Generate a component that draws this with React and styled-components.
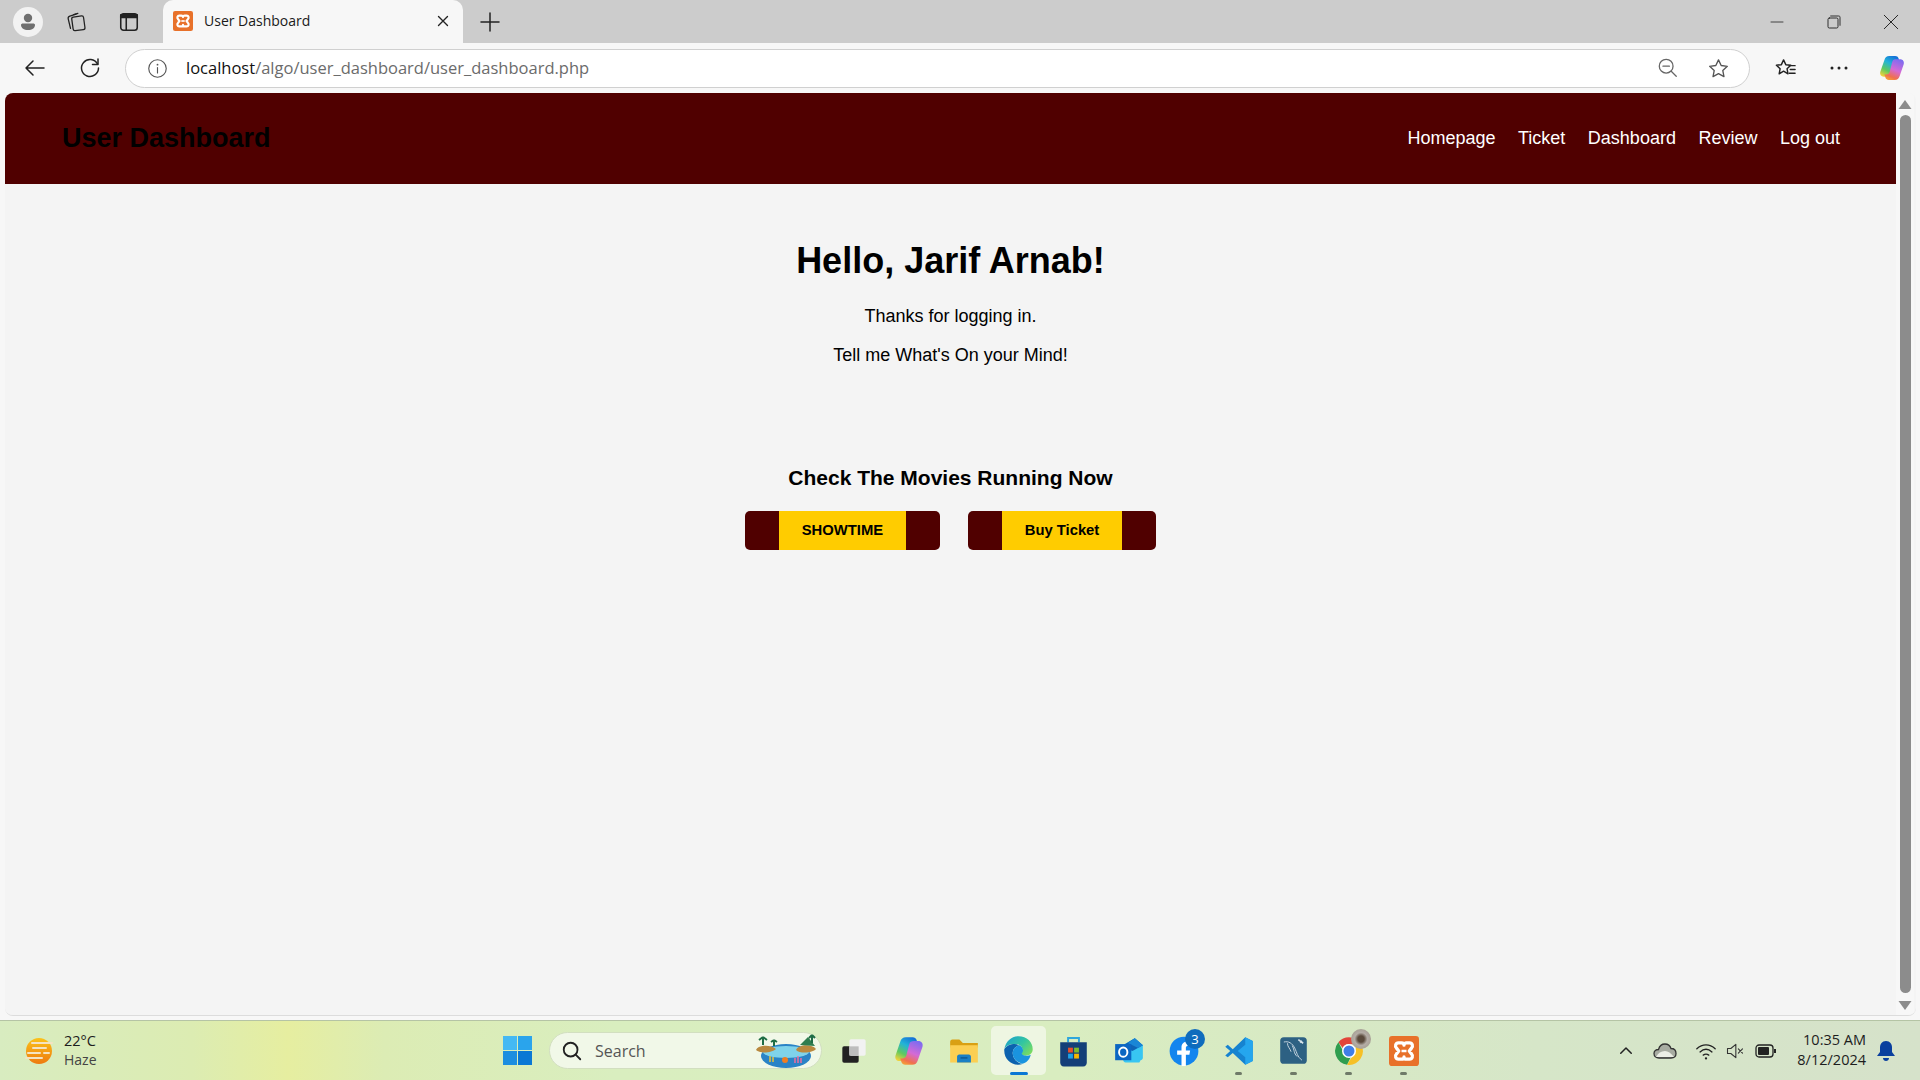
import React from "react";
import styled, { createGlobalStyle } from "styled-components";

const GlobalStyle = createGlobalStyle`
  html, body {
    margin: 0;
    padding: 0;
    height: 100%;
    overflow: hidden;
    font-family: "Liberation Sans", Arial, sans-serif;
  }
  * { box-sizing: border-box; }
`;

const uiFont = `"Open Sans", "Noto Sans", sans-serif`;
const maroon = "#500000";

const Screen = styled.div`
  width: 1920px;
  height: 1080px;
  display: flex;
  flex-direction: column;
  background: #f7f7f7;
`;

/* browser chrome */
const TabStrip = styled.div`
  height: 43px;
  flex: none;
  display: flex;
  align-items: center;
  background: #cccccc;
`;
const StripButton = styled.div`
  width: ${(p) => p.$w || 53}px;
  height: 43px;
  flex: none;
  display: flex;
  align-items: center;
  justify-content: center;
`;
const Avatar = styled.div`
  width: 30px;
  height: 30px;
  margin-left: 13px;
  margin-right: 6px;
  flex: none;
  border-radius: 50%;
  background: #f2f2f2;
  display: flex;
  align-items: center;
  justify-content: center;
`;
const Tab = styled.div`
  width: 300px;
  height: 43px;
  margin-left: 8px;
  flex: none;
  display: flex;
  align-items: center;
  padding: 0 11px 2px 10px;
  background: #f7f7f7;
  border-radius: 10px 10px 0 0;
`;
const TabTitle = styled.span`
  flex: 1;
  margin-left: 11px;
  font: 14px ${uiFont};
  color: #1a1a1a;
`;
const WindowControls = styled.div`
  margin-left: auto;
  display: flex;
  align-items: center;
  padding-right: 1px;
`;
const WindowButton = styled.div`
  width: 57px;
  display: flex;
  justify-content: center;
`;

const Toolbar = styled.div`
  height: 50px;
  flex: none;
  display: flex;
  align-items: center;
  padding-left: 13px;
`;
const ToolButton = styled.div`
  width: ${(p) => p.$w || 56}px;
  flex: none;
  display: flex;
  justify-content: center;
`;
const AddressBar = styled.div`
  width: 1625px;
  height: 39px;
  margin-left: 2px;
  flex: none;
  display: flex;
  align-items: center;
  padding: 0 6px 0 21px;
  background: #fff;
  border: 1px solid #d0d0d0;
  border-radius: 20px;
`;
const Url = styled.span`
  flex: 1;
  margin-left: 18px;
  margin-bottom: 2px;
  font: 16.5px ${uiFont};
  color: #6b6b6b;
  & b {
    font-weight: 400;
    color: #111;
  }
`;
const AddressIcon = styled.div`
  width: 50px;
  display: flex;
  justify-content: center;
`;
const ToolRight = styled.div`
  display: flex;
  align-items: center;
  margin-left: 8px;
`;
const CopilotSlot = styled.div`
  margin-left: 13px;
  display: flex;
`;

/* page viewport */
const Viewport = styled.div`
  flex: 1;
  display: flex;
  margin: 0 4px 4px 5px;
  min-height: 0;
  border-radius: 8px;
  overflow: hidden;
  background: #f4f4f4;
  border-bottom: 1px solid #dcdcdc;
`;
const Page = styled.div`
  flex: 1;
  min-width: 0;
  background: #f4f4f4;
`;
const Navbar = styled.nav`
  height: 91px;
  display: flex;
  align-items: center;
  justify-content: space-between;
  padding: 0 56px 0 57px;
  background: ${maroon};
`;
const Brand = styled.h1`
  margin: 0;
  font-size: 27px;
  font-weight: 700;
  color: #000;
`;
const NavLinks = styled.div`
  display: flex;
  gap: 22.5px;
`;
const NavLink = styled.a`
  font-size: 18px;
  color: #fff;
  text-decoration: none;
`;
const Content = styled.main`
  display: flex;
  flex-direction: column;
  align-items: center;
  padding-top: 56px;
`;
const Greeting = styled.h2`
  margin: 0 0 25px;
  font-size: 36px;
  line-height: 41px;
  font-weight: 700;
  color: #000;
`;
const Line = styled.p`
  margin: 0 0 18px;
  font-size: 18px;
  line-height: 21px;
  color: #000;
`;
const Running = styled.h3`
  margin: 82px 0 21px;
  font-size: 21px;
  line-height: 24px;
  font-weight: 700;
  color: #000;
`;
const Actions = styled.div`
  display: flex;
  gap: 28px;
`;
const ActionButton = styled.a`
  display: block;
  padding: 0 34px;
  background: ${maroon};
  border-radius: 5px;
`;
const ActionLabel = styled.span`
  display: block;
  height: 39px;
  line-height: 39px;
  padding: 0 22.8px;
  background: #ffcc00;
  font-size: 14.8px;
  font-weight: 700;
  color: #000;
`;

const Scrollbar = styled.div`
  width: 18px;
  margin-right: 2px;
  flex: none;
  display: flex;
  flex-direction: column;
  align-items: center;
  padding: 7px 0 5px;
  background: #f7f7f7;
`;
const ScrollThumb = styled.div`
  flex: 1;
  width: 11px;
  margin: 6px 0 8px;
  border-radius: 6px;
  background: #8c8c8c;
`;

/* windows taskbar */
const Taskbar = styled.footer`
  height: 60px;
  flex: none;
  display: flex;
  align-items: center;
  border-top: 1px solid #b5c4a5;
  background: linear-gradient(90deg, #d8ecc0 0, #dcecb2 10%, #e6eea0 15%, #dcecb4 20%, #d9eebf 32%, #d9edc0 55%, #d6e6c8 80%, #d6e2ca 100%);
`;
const Weather = styled.div`
  width: 503px;
  flex: none;
  display: flex;
  align-items: center;
  padding-left: 24px;
  gap: 10px;
`;
const WeatherText = styled.div`
  font: 14.5px/19px ${uiFont};
  color: #1d1d1d;
  margin-top: -1px;
  & span {
    display: block;
    font-size: 14px;
    color: #444;
  }
`;
const Dock = styled.div`
  display: flex;
  align-items: center;
`;
const SearchBox = styled.div`
  width: 273px;
  height: 37px;
  margin: 0 4px 0 17px;
  display: flex;
  align-items: center;
  padding: 0 3px 0 11px;
  border-radius: 19px;
  background: #f1f8e8;
  border: 1px solid #d2dfc0;
`;
const SearchText = styled.span`
  flex: 1;
  margin-left: 12px;
  font: 16px ${uiFont};
  color: #555;
`;
const DockItem = styled.div`
  position: relative;
  width: ${(p) => p.$w || 55}px;
  height: 49px;
  flex: none;
  display: flex;
  align-items: center;
  justify-content: center;
  border-radius: 5px;
  background: ${(p) => (p.$active ? "#eef6e2" : "transparent")};
`;
const RunDot = styled.i`
  position: absolute;
  left: 50%;
  bottom: 0;
  width: ${(p) => (p.$active ? 18 : 7)}px;
  height: 3px;
  margin-left: ${(p) => (p.$active ? -9 : -3.5)}px;
  border-radius: 2px;
  background: ${(p) => (p.$active ? "#0a78d4" : "#6f7a68")};
`;
const Badge = styled.span`
  position: absolute;
  top: 3px;
  right: 6px;
  width: 20px;
  height: 20px;
  border-radius: 50%;
  background: #0f6cbd;
  color: #fff;
  font: 13px/20px ${uiFont};
  text-align: center;
`;
const AppAvatar = styled.span`
  position: absolute;
  top: 3px;
  right: 5px;
  width: 20px;
  height: 20px;
  border-radius: 50%;
  background: radial-gradient(circle at 50% 50%, #5a4a3c 0 22%, #b4ada6 45%, #9a9284 100%);
`;
const Tray = styled.div`
  margin-left: auto;
  padding-right: 17px;
  display: flex;
  align-items: center;
`;
const TrayIcon = styled.div`
  width: ${(p) => p.$w}px;
  flex: none;
  display: flex;
  justify-content: center;
`;
const Clock = styled.div`
  width: 79px;
  margin-right: 3px;
  margin-top: -2px;
  font: 14.5px/20px ${uiFont};
  color: #1d1d1d;
  text-align: right;
  white-space: nowrap;
`;

const Stroke = ({ s = 20, w = 1.5, c = "#222", children }) => (
  <svg width={s} height={s} viewBox="0 0 24 24" fill="none" stroke={c} strokeWidth={w} strokeLinecap="round" strokeLinejoin="round">
    {children}
  </svg>
);

const Xampp = ({ s = 20 }) => (
  <svg width={s} height={s} viewBox="0 0 24 24">
    <rect width="24" height="24" rx="2.5" fill="#e8712a" />
    <path d="M7.500 5.500h2.500c1.300 0 2 .9 2 1.800 0-.9.7-1.800 2-1.800h2.500c2.200 0 3 2.600 1.500 4.200L16.200 12l1.800 2.300c1.500 1.600.7 4.200-1.500 4.200H14c-1.300 0-2-.9-2-1.800 0 .9-.7 1.800-2 1.800H7.500c-2.200 0-3-2.600-1.500-4.200L7.800 12 6 9.700C4.500 8.100 5.300 5.500 7.500 5.500Z" fill="none" stroke="#fff" strokeWidth="2.600" strokeLinejoin="round" />
    <path d="M10 12h4" stroke="#fff" strokeWidth="2" />
  </svg>
);

const Copilot = ({ s = 26 }) => (
  <svg width={s} height={s} viewBox="0 0 24 24">
    <defs>
      <linearGradient id={`cpa${s}`} x1="0.7" y1="0" x2="0.2" y2="1">
        <stop offset="0" stopColor="#1572d8" />
        <stop offset="0.35" stopColor="#22b3d8" />
        <stop offset="0.7" stopColor="#5fc95f" />
        <stop offset="1" stopColor="#efd23c" />
      </linearGradient>
      <linearGradient id={`cpb${s}`} x1="0.7" y1="0" x2="0.3" y2="1">
        <stop offset="0" stopColor="#7e6cf0" />
        <stop offset="0.5" stopColor="#d46ad6" />
        <stop offset="0.85" stopColor="#f0704e" />
        <stop offset="1" stopColor="#f59a3a" />
      </linearGradient>
    </defs>
    <path d="M9.500 1h5.500c1.500 0 2.500.8 3 2L19 6h-1.500c-2 0-3 1-3.500 3l-2.200 8.500C11.200 19.500 10 20 8 20H4.500C2 20 .5 18 1.200 15.500L5 4.500C5.700 2.300 7 1 9.500 1Z" fill={`url(#cpa${s})`} />
    <path d="M14.500 23H9c-1.500 0-2.500-.8-3-2l-1-3h1.500c2 0 3-1 3.500-3l2.200-8.500C12.800 4.500 14 4 16 4h3.500c2.500 0 4 2 3.300 4.500L19 19.500c-.7 2.200-2 3.500-4.500 3.500Z" fill={`url(#cpb${s})`} />
  </svg>
);

const Edge = () => (
  <svg width="31" height="31" viewBox="0 0 24 24">
    <defs>
      <linearGradient id="edgeTop" x1="0" y1="0.1" x2="1" y2="0.8">
        <stop offset="0" stopColor="#1b9fd0" />
        <stop offset="0.55" stopColor="#33c6a0" />
        <stop offset="1" stopColor="#7ddc5e" />
      </linearGradient>
    </defs>
    <path d="M1 11C2 5 6.500 1 12 1c6.500 0 11 4.500 11 10 0 3-2.500 5-5.500 5-2 0-3.500-.6-3.500-1.600 0-.6 1-.9 1-2.400C15.500 9 12.500 7 9 7c-3.500 0-7 1.500-8 4Z" fill="url(#edgeTop)" />
    <path d="M1 11c1.500-2.500 5-4 8-4 1.500 0 2.800.4 3.800 1C9.500 8.500 7.500 11 7.500 14c0 4 3 7.500 7.500 8.500-1 .3-2 .5-3 .5C5.500 23 .5 18 1 11Z" fill="#0c62ae" />
    <path d="M12.800 8c1.600 1 2.700 2.500 2.700 4 0 1.500-1 1.800-1 2.400 0 1 1.500 1.600 3.500 1.600 1.500 0 2.500-.3 3.500-.8-1 4.500-4.500 7.300-9 7.300l2.500-.5C10.500 21.500 7.500 18 7.500 14c0-3 2-5.500 5.300-6Z" fill="#1a94df" />
  </svg>
);

const Chrome = () => (
  <svg width="30" height="30" viewBox="0 0 24 24">
    <path d="M12 1a11 11 0 0 1 9.500 5.500H12a5.500 5.500 0 0 0-5 3L3.500 5A11 11 0 0 1 12 1Z" fill="#e2453a" />
    <path d="M3.500 5 7.800 13a5.500 5.500 0 0 0 6 3L10.500 23A11 11 0 0 1 3.500 5Z" fill="#2f9e4f" />
    <path d="M21.500 6.500A11 11 0 0 1 10.500 23l4.800-8a5.500 5.500 0 0 0 .5-8.500Z" fill="#f6c026" />
    <circle cx="12" cy="12" r="5" fill="#3f7ee8" stroke="#fff" strokeWidth="1.200" />
  </svg>
);

const TaskIcons = {
  view: (
    <svg width="28" height="28" viewBox="0 0 24 24">
      <rect x="2" y="8" width="14" height="14" rx="1.500" fill="#222" />
      <rect x="8" y="2" width="14" height="14" rx="1.500" fill="#f2f2f2" />
      <path d="M8 8h8v8H8Z" fill="#bdbdbd" />
    </svg>
  ),
  folder: (
    <svg width="30" height="28" viewBox="0 0 26 24">
      <path d="M1 4c0-1 .6-2 2-2h6l3 3h13v4H1Z" fill="#d9a013" />
      <path d="M1 7h24v15H1Z" fill="#fbcf52" />
      <path d="M7 17c0-1 .6-2 2-2h8c1.400 0 2 1 2 2v5H7Z" fill="#1a7fc4" />
      <path d="M10 18h6" stroke="#0b4f86" strokeWidth="1" />
    </svg>
  ),
  store: (
    <svg width="29" height="32" viewBox="0 0 24 26.500">
      <path d="M7.500 6V2.500h9V6" fill="none" stroke="#2ea6dc" strokeWidth="1.600" />
      <path d="M1 6h22v16.500c0 2-1 3.500-3 3.500H4c-2 0-3-1.500-3-3.500Z" fill="#143f78" />
      <rect x="7.500" y="10.500" width="4" height="4" fill="#ea4f2a" />
      <rect x="12.500" y="10.500" width="4" height="4" fill="#7cba2c" />
      <rect x="7.500" y="15.500" width="4" height="4" fill="#1ea2e6" />
      <rect x="12.500" y="15.500" width="4" height="4" fill="#f7b500" />
    </svg>
  ),
  outlook: (
    <svg width="30" height="28" viewBox="0 0 26 24">
      <path d="M6 8 18 1l7 6v11c0 1-1 2-2 2l-1 2H10c-1 0-2-1-2-2Z" fill="#38c6f2" />
      <path d="M6 8 18 1l7 6-9 5Z" fill="#0f63b5" />
      <path d="M12 5l6-4 7 6-4 2.500Z" fill="#1a86d6" />
      <rect x="1" y="6" width="14" height="14" fill="#0b66c2" />
      <ellipse cx="8" cy="13" rx="3.600" ry="4" fill="none" stroke="#fff" strokeWidth="1.700" />
    </svg>
  ),
  facebook: (
    <svg width="30" height="30" viewBox="0 0 24 24">
      <circle cx="12" cy="12" r="11.500" fill="#1385ee" />
      <path d="M10 24v-9H6.500v-3.500H10V9c0-3 1.800-4.500 4.500-4.500l2.500.2v3h-1.700c-1.400 0-1.800.8-1.800 1.800v2h3.400l-.6 3.500h-2.800v9Z" fill="#fff" />
    </svg>
  ),
  vscode: (
    <svg width="30" height="30" viewBox="0 0 24 24">
      <path d="M17 1 23 4v16l-6 3L7 13.500 3 17l-2-1.500L5 12 1 8.500 3 7l4 3.500Z" fill="#1683d0" />
      <path d="M17 1 23 4v16l-6 3Zm0 6-6 5 6 5Z" fill="#25a6ee" fillRule="evenodd" />
    </svg>
  ),
  mysql: (
    <svg width="29" height="29" viewBox="0 0 24 24">
      <rect x="1" y="1" width="22" height="22" rx="3" fill="#2d6183" />
      <path d="M4 5c4-1 7 1 9 5s2 7 6 10M7 6c0 3 2 4 3 7M11 8c2 4 1 6 4 9" fill="none" stroke="#c7d6e0" strokeWidth="0.800" />
      <path d="M16 3l4 3M17.500 5.500l1.500-1.500" fill="none" stroke="#d6e2ea" strokeWidth="1.300" />
    </svg>
  ),
};

const Island = () => (
  <svg width="64" height="36" viewBox="0 0 64 36">
    <ellipse cx="32" cy="23" rx="25" ry="12" fill="#2a83c6" />
    <ellipse cx="32" cy="19" rx="23" ry="6" fill="#7fd3ea" />
    <path d="M2 17c2-5 14-6 20-1-4 4-16 5-20 1ZM42 17c3-6 16-6 20-1-3 4-16 5-20 1Z" fill="#b9893f" />
    <path d="M46 12l8-8 7 9Z" fill="#2f7d4f" />
    <path d="M9 12V4M9 4l-4 3M9 4l4 3M20 13V7M20 7l-3 2M20 7l3 2M58 10V2M58 2l-3 3M58 2l3 3" stroke="#1f6d45" strokeWidth="2" fill="none" />
    <circle cx="31" cy="27" r="3" fill="#ef7d22" />
    <path d="M44 30v-7M41 30v-5M47 30v-5" stroke="#ee6ea0" strokeWidth="1.500" />
    <path d="M16 29v-6M19 29v-5" stroke="#e8c33a" strokeWidth="1.500" />
  </svg>
);

const links = ["Homepage", "Ticket", "Dashboard", "Review", "Log out"];

const dock = [
  { key: "view", icon: TaskIcons.view },
  { key: "copilot", icon: <Copilot s={30} /> },
  { key: "folder", icon: TaskIcons.folder },
  { key: "edge", icon: <Edge />, active: true },
  { key: "store", icon: TaskIcons.store },
  { key: "outlook", icon: TaskIcons.outlook },
  { key: "facebook", icon: TaskIcons.facebook, badge: "3" },
  { key: "vscode", icon: TaskIcons.vscode, running: true },
  { key: "mysql", icon: TaskIcons.mysql, running: true },
  { key: "chrome", icon: <Chrome />, running: true, overlay: true },
  { key: "xampp", icon: <Xampp s={30} />, running: true },
];

const App = () => (
  <Screen>
    <GlobalStyle />
    <TabStrip>
      <Avatar>
        <svg width="20" height="20" viewBox="0 0 20 20" fill="#6f6f6f">
          <circle cx="10" cy="6" r="4.200" />
          <path d="M3 13c0-1 .8-1.500 2-1.500h10c1.200 0 2 .5 2 1.500 0 3-3 5-7 5s-7-2-7-5Z" />
        </svg>
      </Avatar>
      <StripButton>
        <Stroke s={22} w={1.400}>
          <rect x="8" y="6" width="13" height="15" rx="2" transform="rotate(-8 14 13)" />
          <path d="M6 19 3.500 8.500c-.3-1.500.3-2.500 1.800-3L12 3.500" />
          <path d="M9.500 4 14 2.500" />
        </Stroke>
      </StripButton>
      <StripButton>
        <Stroke s={22} w={1.700}>
          <rect x="3" y="3" width="18" height="18" rx="3" />
          <path d="M3 4h18v3H3Z" fill="#222" />
          <path d="M9 7v14" />
        </Stroke>
      </StripButton>
      <Tab>
        <Xampp />
        <TabTitle>User Dashboard</TabTitle>
        <Stroke s={18} w={1.800}>
          <path d="M6 6l12 12M18 6 6 18" />
        </Stroke>
      </Tab>
      <StripButton $w={54}>
        <Stroke s={24} w={1.500}>
          <path d="M12 3v18M3 12h18" />
        </Stroke>
      </StripButton>
      <WindowControls>
        <WindowButton>
          <Stroke s={16} w={1.200}>
            <path d="M3 12h18" />
          </Stroke>
        </WindowButton>
        <WindowButton>
          <Stroke s={16} w={1.400}>
            <rect x="3" y="6" width="15" height="15" rx="2" />
            <path d="M7 3h12c1.500 0 2 .8 2 2v12" />
          </Stroke>
        </WindowButton>
        <WindowButton>
          <Stroke s={18} w={1.300}>
            <path d="M3 3l18 18M21 3 3 21" />
          </Stroke>
        </WindowButton>
      </WindowControls>
    </TabStrip>

    <Toolbar>
      <ToolButton $w={43}>
        <Stroke s={24} w={1.500}>
          <path d="M21 12H3M10 5l-7 7 7 7" />
        </Stroke>
      </ToolButton>
      <ToolButton $w={67}>
        <Stroke s={24} w={1.500}>
          <path d="M19.500 8A8.500 8.500 0 1 0 20.500 12" />
          <path d="M20 3v5.500h-5.500" />
        </Stroke>
      </ToolButton>
      <AddressBar>
        <Stroke s={21} w={1.300} c="#555">
          <circle cx="12" cy="12" r="10" />
          <path d="M12 11v6" />
          <path d="M12 7.500v.1" strokeWidth="2" />
        </Stroke>
        <Url>
          <b>localhost</b>/algo/user_dashboard/user_dashboard.php
        </Url>
        <AddressIcon>
          <Stroke s={22} w={1.400} c="#666">
            <circle cx="10" cy="10" r="7.500" />
            <path d="M6.500 10h7M15.500 15.500 21 21" />
          </Stroke>
        </AddressIcon>
        <AddressIcon>
          <Stroke s={23} w={1.400} c="#555">
            <path d="m12 3 2.800 5.900 6.400.8-4.700 4.400 1.200 6.400L12 17.400l-5.700 3.100 1.200-6.400-4.700-4.400 6.400-.8Z" />
          </Stroke>
        </AddressIcon>
      </AddressBar>
      <ToolRight>
        <ToolButton $w={54}>
          <Stroke s={23} w={1.500}>
            <path d="m10 3 2.300 5 5.200.6-3.900 3.600 1 5.300-4.600-2.700-4.600 2.700 1-5.300L2.500 8.600 7.700 8Z" />
            <path d="M16 9h6M17 13h5M16 17h6" />
          </Stroke>
        </ToolButton>
        <ToolButton $w={54}>
          <svg width="20" height="6" viewBox="0 0 20 6" fill="#222">
            <circle cx="3" cy="3" r="1.500" />
            <circle cx="10" cy="3" r="1.500" />
            <circle cx="17" cy="3" r="1.500" />
          </svg>
        </ToolButton>
        <CopilotSlot>
          <Copilot />
        </CopilotSlot>
      </ToolRight>
    </Toolbar>

    <Viewport>
      <Page>
        <Navbar>
          <Brand>User Dashboard</Brand>
          <NavLinks>
            {links.map((link) => (
              <NavLink key={link}>{link}</NavLink>
            ))}
          </NavLinks>
        </Navbar>
        <Content>
          <Greeting>Hello, Jarif Arnab!</Greeting>
          <Line>Thanks for logging in.</Line>
          <Line>Tell me What's On your Mind!</Line>
          <Running>Check The Movies Running Now</Running>
          <Actions>
            <ActionButton>
              <ActionLabel>SHOWTIME</ActionLabel>
            </ActionButton>
            <ActionButton>
              <ActionLabel>Buy Ticket</ActionLabel>
            </ActionButton>
          </Actions>
        </Content>
      </Page>
      <Scrollbar>
        <svg width="14" height="9" viewBox="0 0 14 9" fill="#8c8c8c">
          <path d="M7 0l6.500 9H.5Z" />
        </svg>
        <ScrollThumb />
        <svg width="14" height="9" viewBox="0 0 14 9" fill="#8c8c8c">
          <path d="M7 9 .5 0h13Z" />
        </svg>
      </Scrollbar>
    </Viewport>

    <Taskbar>
      <Weather>
        <svg width="30" height="30" viewBox="0 0 30 30">
          <defs>
            <linearGradient id="sun" x1="0" y1="0" x2="0" y2="1">
              <stop offset="0" stopColor="#fbc21a" />
              <stop offset="1" stopColor="#ee7a10" />
            </linearGradient>
          </defs>
          <circle cx="15" cy="15" r="13" fill="url(#sun)" />
          <path d="M8 7h20M9 12h13M4 17h12M20 17h5M2 22h16" stroke="#f4e3c2" strokeWidth="2" strokeLinecap="round" />
        </svg>
        <WeatherText>
          22°C
          <span>Haze</span>
        </WeatherText>
      </Weather>
      <Dock>
        <svg width="29" height="29" viewBox="0 0 29 29">
          <path d="M0 0h14v14H0Z" fill="#45b9f3" />
          <path d="M15 0h14v14H15Z" fill="#2aa4ec" />
          <path d="M0 15h14v14H0Z" fill="#1c8ee0" />
          <path d="M15 15h14v14H15Z" fill="#0a78d4" />
        </svg>
        <SearchBox>
          <Stroke s={22} w={2}>
            <circle cx="10.500" cy="10.500" r="7.500" />
            <path d="m16 16 5 5" />
          </Stroke>
          <SearchText>Search</SearchText>
          <Island />
        </SearchBox>
        {dock.map((item) => (
          <DockItem key={item.key} $active={item.active}>
            {item.icon}
            {item.badge && <Badge>{item.badge}</Badge>}
            {item.overlay && <AppAvatar />}
            {(item.active || item.running) && <RunDot $active={item.active} />}
          </DockItem>
        ))}
      </Dock>
      <Tray>
        <TrayIcon $w={34}>
          <Stroke s={18} w={2}>
            <path d="m5 15 7-7 7 7" />
          </Stroke>
        </TrayIcon>
        <TrayIcon $w={44}>
          <svg width="24" height="16" viewBox="0 0 24 16">
            <path d="M6 15C3 15 1 13 1 10.500 1 8 3 6.500 5.500 6.500 6.500 3 9 1 12 1c3 0 5 1.500 6 4.500 3 0 5 2 5 5S21 15 18 15Z" fill="#a8aca2" stroke="#333" strokeWidth="1.300" />
            <path d="M3 14c2-4 5-6 9-6 3 0 6 2 9 6Z" fill="#eceee6" />
          </svg>
        </TrayIcon>
        <TrayIcon $w={38}>
          <Stroke s={22} w={1.500} c="#222">
            <path d="M2 9.500c6-5.500 14-5.500 20 0M5.500 13c4-3.500 9-3.500 13 0M9 16.500c2-1.500 4-1.500 6 0" />
            <path d="M12 20v.1" strokeWidth="2.500" />
          </Stroke>
        </TrayIcon>
        <TrayIcon $w={20}>
          <Stroke s={20} w={1.300} c="#333">
            <path d="M3 9v6h4l6 5V4L7 9ZM16 9.500l5 5M21 9.500l-5 5" />
          </Stroke>
        </TrayIcon>
        <TrayIcon $w={42}>
          <svg width="22" height="14" viewBox="0 0 22 14">
            <rect x="1" y="1" width="17" height="12" rx="3" fill="none" stroke="#222" strokeWidth="1.300" />
            <rect x="3" y="3" width="11" height="8" rx="1" fill="#222" />
            <path d="M19 5h2v4h-2Z" fill="#222" />
          </svg>
        </TrayIcon>
        <Clock>
          10:35 AM
          <br />
          8/12/2024
        </Clock>
        <TrayIcon $w={34}>
          <svg width="20" height="22" viewBox="0 0 20 22" fill="#0a3f9e">
            <path d="M10 1c4 0 6 3 6 6.500V12l3 4H1l3-4V7.500C4 4 6 1 10 1Z" />
            <path d="M7 18h6c0 2-1.500 3-3 3s-3-1-3-3Z" />
          </svg>
        </TrayIcon>
      </Tray>
    </Taskbar>
  </Screen>
);

export default App;
